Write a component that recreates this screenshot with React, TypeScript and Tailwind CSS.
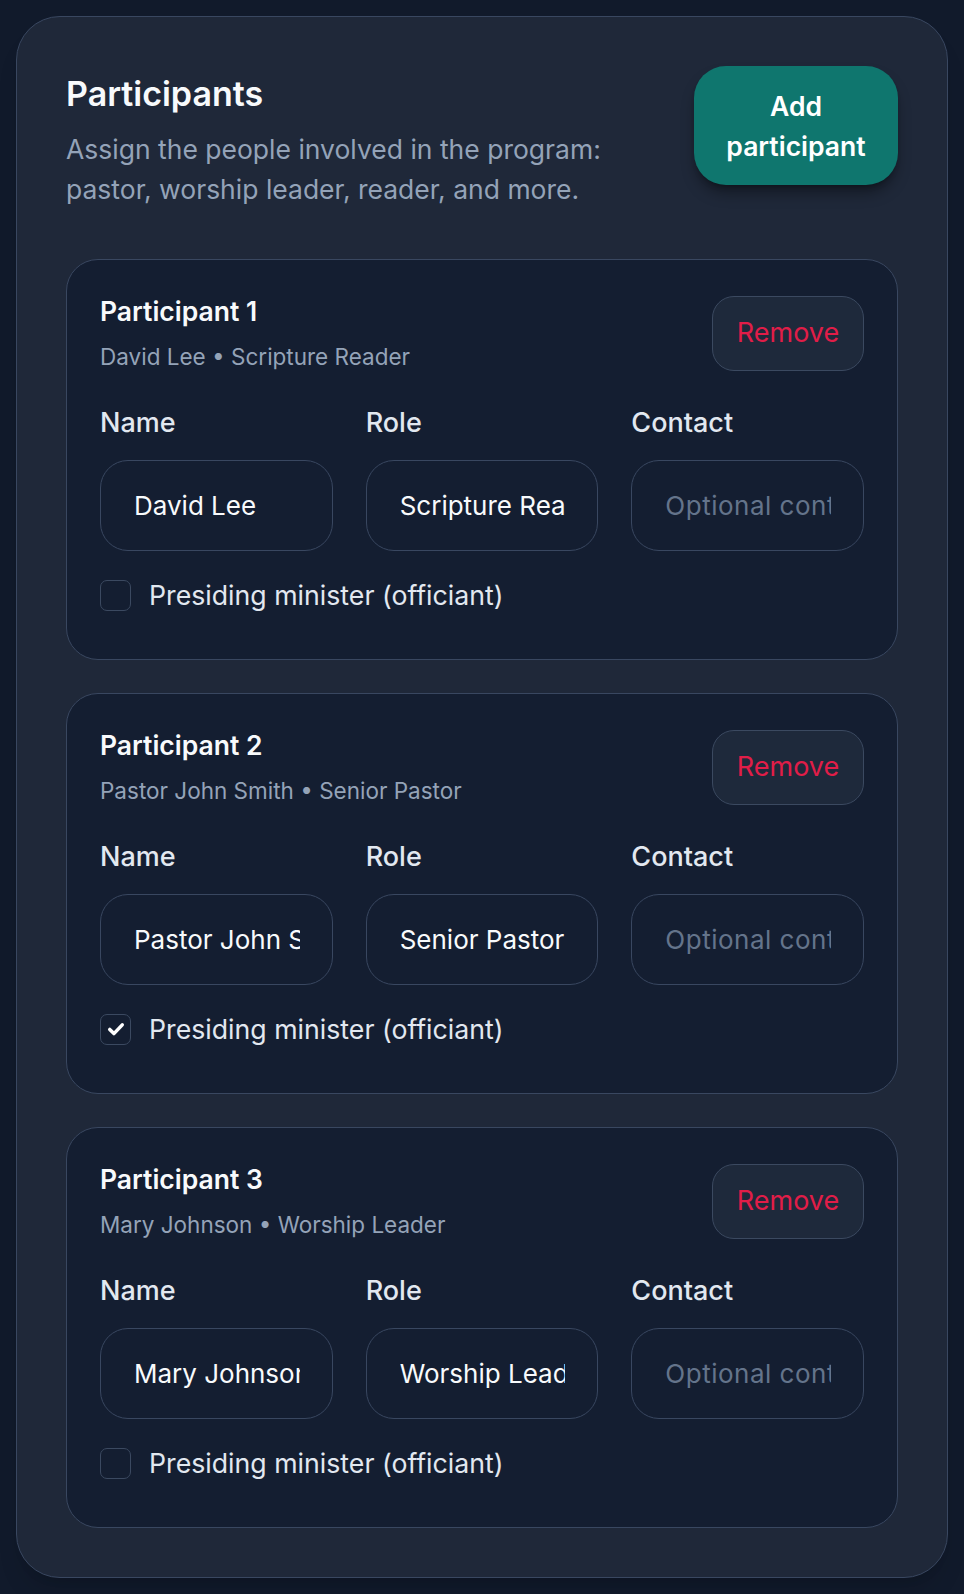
import React from "react";

type P = { title: string; name: string; role: string; checked: boolean };

const people: P[] = [
  { title: "Participant 1", name: "David Lee", role: "Scripture Reader", checked: false },
  { title: "Participant 2", name: "Pastor John Smith", role: "Senior Pastor", checked: true },
  { title: "Participant 3", name: "Mary Johnson", role: "Worship Leader", checked: false },
];

function Field({ label, value, placeholder }: { label: string; value?: string; placeholder?: string }) {
  return (
    <div className="flex flex-col min-w-0">
      <div className="text-[27px] leading-[36px] font-medium text-[#e2e8f0]">{label}</div>
      <input
        readOnly
        value={value ?? ""}
        placeholder={placeholder}
        className="mt-[19px] h-[91px] w-full min-w-0 rounded-[28px] border border-[#394760] bg-[#141e31] pl-[33px] pr-8 text-[26px] text-[#f8fafc] placeholder:text-[#64748b] placeholder:tracking-[0.5px] outline-none"
        style={{ fontFamily: "inherit" }}
      />
    </div>
  );
}

function Card({ p }: { p: P }) {
  return (
    <div className="rounded-[32px] border border-[#394760] bg-[#141e31] px-[33px] pt-[33px] pb-[46px]">
      <div className="flex items-center justify-between">
        <div>
          <div className="text-[26.5px] leading-[36px] font-semibold text-[#f8fafc]">{p.title}</div>
          <div className="mt-[12px] text-[22.5px] leading-[32px] text-[#94a3b8]">
            {p.name} • {p.role}
          </div>
        </div>
        <button className="h-[75px] w-[152px] rounded-[22px] border border-[#3b4960] bg-[#1e293b] text-[27px] font-normal text-[#e11d48]">
          Remove
        </button>
      </div>
      <div className="mt-[32px] grid grid-cols-3 gap-[33px]">
        <Field label="Name" value={p.name} />
        <Field label="Role" value={p.role} />
        <Field label="Contact" placeholder="Optional contact" />
      </div>
      <label className="mt-[26px] flex items-center gap-[18px]">
        <span className="flex h-[31px] w-[31px] shrink-0 items-center justify-center rounded-[7px] border border-[#3b4960] bg-[#141e31]">
          {p.checked && (
            <svg width="20" height="20" viewBox="0 0 24 24" fill="none">
              <path d="M4.5 12.5l5 5L19.5 7" stroke="#ffffff" strokeWidth="4.2" strokeLinecap="round" strokeLinejoin="round" />
            </svg>
          )}
        </span>
        <span className="text-[26.7px] leading-[36px] text-[#e2e8f0]">Presiding minister (officiant)</span>
      </label>
    </div>
  );
}

export default function App() {
  return (
    <div
      className="min-h-[1594px] bg-[#111a2b] p-4"
      style={{ fontFamily: "Inter, 'Noto Sans', sans-serif" }}
    >
      <div className="rounded-[44px] border border-[#394760] bg-[#1f2839] p-[49px] shadow-xl">
        <div className="flex items-start justify-between">
          <div>
            <h1 className="mt-2 text-[34px] leading-[40px] font-semibold text-[#f8fafc]">Participants</h1>
            <p className="mt-[15px] text-[26.5px] leading-[40px] text-[#94a3b8]">
              Assign the people involved in the program:
              <br />
              pastor, worship leader, reader, and more.
            </p>
          </div>
          <button className="h-[119px] w-[204px] shrink-0 rounded-[32px] bg-[#0f766e] text-[26.5px] leading-[40px] font-semibold text-white shadow-lg shadow-black/40">
            Add
            <br />
            participant
          </button>
        </div>
        <div className="mt-[50px] flex flex-col gap-[33px]">
          {people.map((p) => (
            <Card key={p.title} p={p} />
          ))}
        </div>
      </div>
    </div>
  );
}
